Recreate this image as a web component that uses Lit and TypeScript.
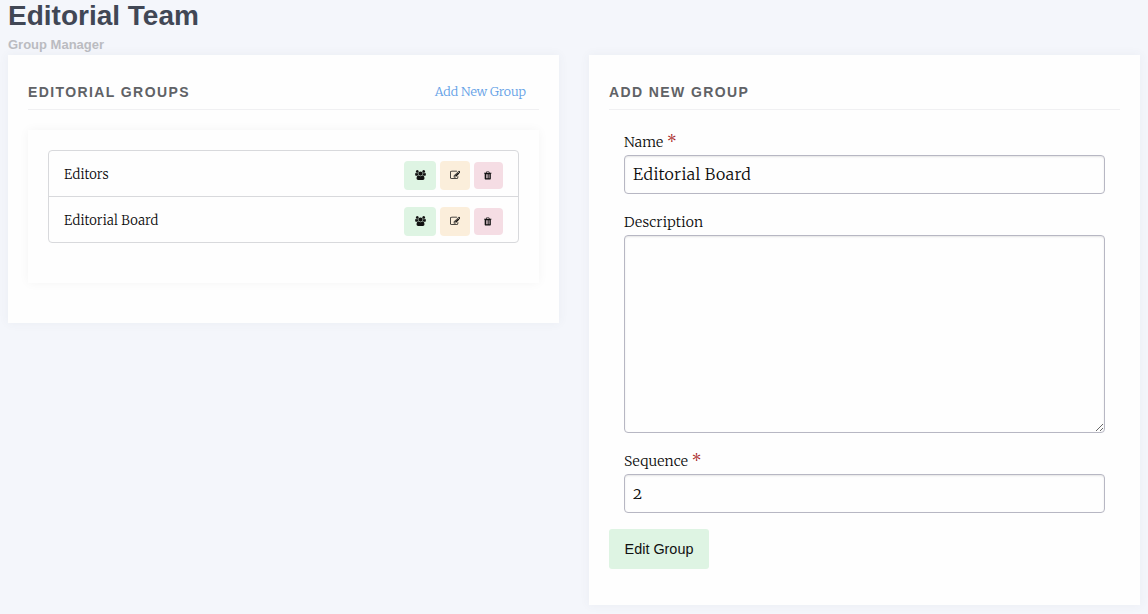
import { LitElement, html, css, svg } from "lit";
import { customElement, state } from "lit/decorators.js";

const users = svg`<svg class="i-users" viewBox="0 0 1920 1792"><path d="M593 896q-162 5-265 128H194q-82 0-138-40.500T0 865q0-353 124-353 6 0 43.500 21t97.500 42.500T384 597q67 0 133-23-5 37-5 66 0 139 81 256zm1071 637q0 120-73 189.500t-194 69.500H523q-121 0-194-69.500T256 1533q0-53 3.500-103.500t14-109T300 1212t43-97.500 62-81 85.500-53.500T602 960q10 0 43 21.500t73 48 107 48 135 21.500 135-21.500 107-48 73-48 43-21.500q61 0 111.500 20t85.500 53.500 62 81 43 97.500 26.500 108.500 14 109 3.500 103.500zM640 256q0 106-75 181t-181 75-181-75-75-181 75-181T384 0t181 75 75 181zm704 384q0 159-112.500 271.500T960 1024 688.500 911.500 576 640t112.500-271.500T960 256t271.500 112.500T1344 640zm576 225q0 78-56 118.500t-138 40.500h-134q-103-123-265-128 81-117 81-256 0-29-5-66 66 23 133 23 59 0 119-21.500t97.500-42.500 43.500-21q124 0 124 353zm-128-609q0 106-75 181t-181 75-181-75-75-181 75-181 181-75 181 75 75 181z"/></svg>`;

const edit = svg`<svg class="i-edit" viewBox="0 0 1792 1536"><path d="M888 1184l116-116-152-152-116 116v56h96v96h56zm440-720q-16-16-33 1l-350 350q-17 17-1 33t33-1l350-350q17-17 1-33zm80 594v190q0 119-84.500 203.500T1120 1536H288q-119 0-203.500-84.500T0 1248V416q0-119 84.500-203.500T288 128h832q63 0 117 25 15 7 18 23 3 17-9 29l-49 49q-14 14-32 8-23-6-45-6H288q-66 0-113 47t-47 113v832q0 66 47 113t113 47h832q66 0 113-47t47-113v-126q0-13 9-22l64-64q15-15 35-7t20 29zm-96-738l288 288-672 672H640V928zm444 132l-92 92-288-288 92-92q28-28 68-28t68 28l152 152q28 28 28 68t-28 68z"/></svg>`;

const trash = svg`<svg class="i-trash" viewBox="0 0 1408 1536"><path fill-rule="evenodd" d="M512 1248V544q0-14-9-23t-23-9h-64q-14 0-23 9t-9 23v704q0 14 9 23t23 9h64q14 0 23-9t9-23zm256 0V544q0-14-9-23t-23-9h-64q-14 0-23 9t-9 23v704q0 14 9 23t23 9h64q14 0 23-9t9-23zm256 0V544q0-14-9-23t-23-9h-64q-14 0-23 9t-9 23v704q0 14 9 23t23 9h64q14 0 23-9t9-23zM480 256h448l-48-117q-7-9-17-11H546q-10 2-17 11zm928 32v64q0 14-9 23t-23 9h-96v948q0 83-47 143.500t-113 60.500H288q-66 0-113-58.500T128 1336V384H32q-14 0-23-9t-9-23v-64q0-14 9-23t23-9h309l70-167q15-37 54-63t79-26h320q40 0 79 26t54 63l70 167h309q14 0 23 9t9 23z"/></svg>`;

@customElement("app-root")
export class AppRoot extends LitElement {
  @state() groups = ["Editors", "Editorial Board"];

  static styles = css`
    :host {
      display: block;
      box-sizing: border-box;
      height: 614px;
      overflow: hidden;
      padding: 0 8px;
      background: #f4f6fb;
      color: #0a0a0a;
      font-family: "Merriweather", "DejaVu Serif Condensed", "DejaVu Serif", serif;
      font-weight: 300;
    }
    * { box-sizing: border-box; }
    h1, h2, h3 { margin: 0; font-family: "Liberation Sans", sans-serif; font-weight: 700; }
    h1 { font-size: 28px; line-height: 32px; height: 37px; color: #414755; }
    h2 { font-size: 13px; line-height: 16px; height: 18px; color: #bbbcc1; }
    .columns { display: grid; grid-template-columns: 1fr 1fr; gap: 30px; align-items: start; }
    .panel { background: #fefefe; padding: 20px; box-shadow: 0 0 10px rgba(70, 80, 110, 0.06); }
    .groups { height: 268px; }
    .editor { height: 550px; }
    .head {
      display: flex;
      justify-content: space-between;
      height: 35px;
      border-bottom: 1px solid #f0f0f2;
      line-height: 34px;
    }
    h3 { font-size: 14px; letter-spacing: 1.4px; color: #606266; }
    .add { font-size: 12.400px; line-height: 33px; color: #62a0e6; padding-right: 13px; text-decoration: none; }
    .card { margin-top: 20px; height: 153px; padding: 20px; box-shadow: 0 0 10px rgba(0, 0, 0, 0.045); }
    .list { border: 1px solid #d8d9dc; border-radius: 4px; }
    .row { display: flex; align-items: center; height: 45px; padding: 2px 15px 0; font-size: 13px; letter-spacing: 0.160px; }
    .row + .row { height: 46px; border-top: 1px solid #d8d9dc; }
    .name { flex: 1; }
    .actions { display: flex; align-items: center; gap: 4px; padding-top: 1px; }
    .btn { display: flex; align-items: center; justify-content: center; border: 0; padding: 0; border-radius: 4px; height: 29px; }
    .green { width: 32px; background: #def4e3; }
    .amber { width: 30px; background: #fbeedb; }
    .pink { width: 29px; height: 27px; background: #f5dde4; }
    svg { display: block; fill: #111; }
    .i-users { width: 11px; height: 10px; margin-bottom: 1px; }
    .i-edit { width: 10.500px; height: 9px; margin-bottom: 2px; }
    .i-trash { width: 7.500px; height: 9px; margin-right: 1px; }
    .form { padding: 20px 15px 0; }
    label { display: block; font-size: 14px; letter-spacing: 0.160px; line-height: 25px; height: 25px; }
    .req { color: #a81c1c; font-size: 16px; line-height: 1; }
    input, textarea {
      display: block;
      width: 100%;
      margin: 0;
      height: 39px;
      border: 1px solid #b7b7c3;
      border-radius: 4px;
      background: #fefefe;
      box-shadow: inset 0 1px 2px rgba(10, 10, 10, 0.1);
      padding: 7px 8px 9px;
      color: #0a0a0a;
      font: inherit;
      font-size: 16px;
      letter-spacing: 0.320px;
      font-variant-numeric: oldstyle-nums;
      outline: 0;
    }
    textarea { height: 198px; }
    .field { margin-bottom: 16px; }
    .submit {
      width: 100px;
      height: 40px;
      border: 0;
      border-radius: 3px;
      background: #def4e3;
      color: #111;
      font: 14.400px "Liberation Sans", sans-serif;
      padding: 0;
      display: block;
    }
  `;

  render() {
    return html`
      <h1>Editorial Team</h1>
      <h2>Group Manager</h2>
      <div class="columns">
        <section class="panel groups">
          <div class="head"><h3>EDITORIAL GROUPS</h3><a class="add">Add New Group</a></div>
          <div class="card">
            <div class="list">
              ${this.groups.map(
                (g) => html`<div class="row">
                  <span class="name">${g}</span>
                  <div class="actions">
                    <button class="btn green" aria-label="Members">${users}</button>
                    <button class="btn amber" aria-label="Edit">${edit}</button>
                    <button class="btn pink" aria-label="Delete">${trash}</button>
                  </div>
                </div>`
              )}
            </div>
          </div>
        </section>
        <section class="panel editor">
          <div class="head"><h3>ADD NEW GROUP</h3></div>
          <div class="form">
            <div class="field"><label>Name <span class="req">*</span></label><input .value=${"Editorial Board"} /></div>
            <div class="field"><label>Description</label><textarea></textarea></div>
            <div class="field"><label>Sequence <span class="req">*</span></label><input .value=${"2"} /></div>
          </div>
          <button class="submit">Edit Group</button>
        </section>
      </div>
    `;
  }
}
